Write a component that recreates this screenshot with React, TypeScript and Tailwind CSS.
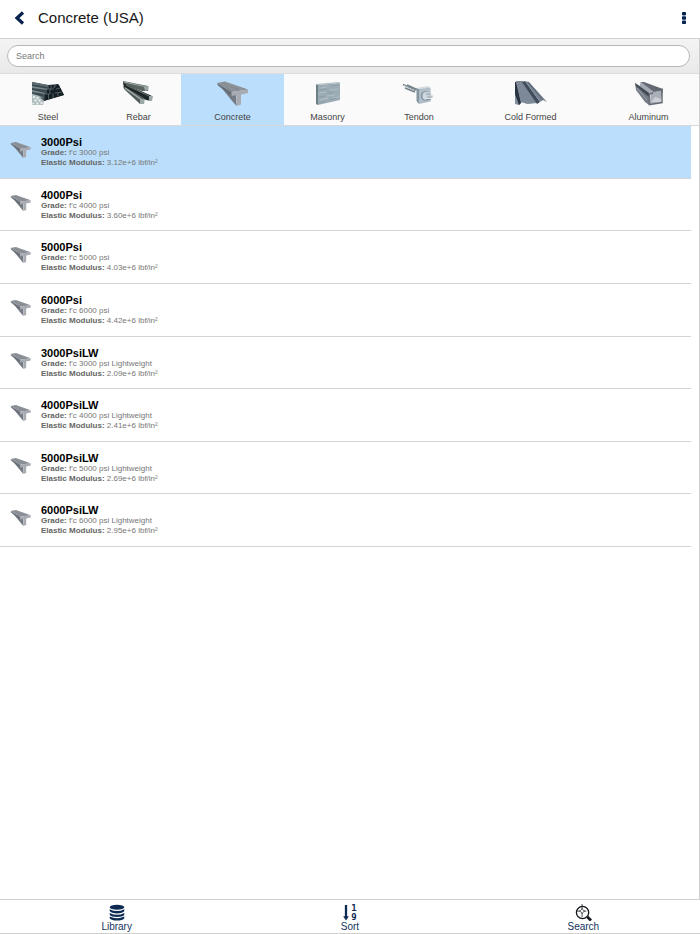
import React, { useState } from 'react';

type Art = () => React.ReactElement;

const SteelArt: Art = () => (
  <svg width="34" height="26" viewBox="0 0 34 26" aria-hidden="true">
    <path d="M1 2 L17 5 L27 4 L33 15 L12 21 L1 17Z" fill="#3c4a4f" />
    <path d="M1 2 L17 5 V7 L1 4.500Z" fill="#5d6c71" />
    <path d="M1 6 L17 9 V10 L1 8Z M1 10 L14 13 V14 L1 12Z M1 13.500 L12 17 V18 L1 15.500Z" fill="#7c8c91" />
    <path d="M20 5h3l-1 3h2l2-4 2 1 5 10-20 6v-6l3-1V9h2V5Z" fill="#161f23" />
    <path d="M16 9h4v-4 M15 14h4V9h4 M13 20v-6 M17.500 19v-5 M22 18v-5 M25 9l4-1 M24 13l7-1 M27 16v-3" fill="none" stroke="#5f7075" strokeWidth=".8" />
    <path d="M1 14 L8 16 L13 21 L12 25 H1Z" fill="#aebabc" />
    <g fill="#e4eaeb">
      <circle cx="3" cy="17" r="1.200" />
      <circle cx="6.500" cy="18" r="1.200" />
      <circle cx="4.500" cy="20.500" r="1.200" />
      <circle cx="8.500" cy="20.500" r="1.200" />
      <circle cx="2.300" cy="23.500" r="1.100" />
      <circle cx="6.300" cy="23.500" r="1.200" />
      <circle cx="10.500" cy="23" r="1.200" />
    </g>
  </svg>
);

const RebarArt: Art = () => (
  <svg width="34" height="26" viewBox="0 0 34 26" aria-hidden="true">
    <path d="M1 1 L26 6 L26 11 L20 11 L1 4Z" fill="#59635f" />
    <path d="M2 2 L25 7" stroke="#a1aaa5" strokeWidth="1.200" />
    <path d="M1 3 L30 16 L30 21 L24 20 L2 7Z" fill="#202728" />
    <path d="M4 5 L27 16" stroke="#6b7572" strokeWidth="1" />
    <path d="M1 6 L22 18 L22 24 L18 24 L2 9Z" fill="#525d5c" />
    <path d="M3 8 L20 20" stroke="#a7b0ad" strokeWidth="1.500" />
    <path d="M22 7 L26.500 6 V10 L23 11Z M27 16 L31 16 L30 21 L27 21Z M18 19 L23 19 L22 24 L18 24Z" fill="#9ca7a7" />
  </svg>
);

const BeamShape = ({ width, height }: { width: number; height: number }) => (
  <svg width={width} height={height} viewBox="0 0 34 26" aria-hidden="true">
    <path d="M4 6 L20 14 L20.500 26 L17 22Z" fill="#747b84" />
    <path d="M1 3 L15.500 12 L15.500 16 L2 5.500Z" fill="#686e77" />
    <path d="M1 3 L9 1.500 L32 9.500 L15.500 12Z" fill="#878c93" />
    <path d="M4 3 L20 11 M8 2 L28 10" stroke="#979ba1" strokeWidth=".8" />
    <path d="M15.500 12 L32 9.500 V13 L25 14.500 V24.500 L20.500 26 V15 L15.500 16Z" fill="#a9abb2" />
  </svg>
);

const ConcreteArt: Art = () => <BeamShape width={34} height={26} />;

const MasonryArt: Art = () => (
  <svg width="34" height="26" viewBox="0 0 34 26" aria-hidden="true">
    <path d="M5 4 L7 5 V25 L5 24Z" fill="#6b7f88" />
    <path d="M5 4 L28 2 L29 3 L7 5Z" fill="#b3c0c7" />
    <path d="M7 5 L29 3 V20 L7 25Z" fill="#9cacb5" />
    <path d="M10 8l6-1 M19 10l8-1 M8 13l7-1 M16 16l8-1 M9 20l8-2 M22 18l6-1" stroke="#b0bec6" strokeWidth="1.200" />
    <path d="M8 10l8-1 M20 6l7-1 M17 13l6-1 M8 17l6-1 M18 20l8-2 M8 23l7-2" stroke="#8b9da7" strokeWidth="1" />
  </svg>
);

const TendonArt: Art = () => (
  <svg width="34" height="26" viewBox="0 0 34 26" aria-hidden="true">
    <path d="M1 4.500 L14 10.500 M3 8 L13 12 M5 5 L15 9.500" stroke="#75838a" strokeWidth="1.500" />
    <path d="M2 5.500 L14 11" stroke="#d0d7da" strokeWidth="1" strokeDasharray="2 1" />
    <path d="M14.500 8 L17 9 L17 24 L14.500 21Z" fill="#8495a0" />
    <path d="M14.500 8 L26 6 L28.500 7.500 L17 9Z" fill="#d2dade" />
    <path d="M17 9 L28.500 7.500 V21.500 L17 24Z" fill="#b0bec7" />
    <circle cx="23.500" cy="16" r="4.800" fill="#8999a5" />
    <circle cx="24.500" cy="16" r="4" fill="#cfd8df" />
    <path d="M24 13.500 H28.500 M25 16.500 H30.500 M24 19 H29" stroke="#8292a0" strokeWidth="2" />
    <path d="M24 13 H28.500 M25 16 H30.500 M24 18.500 H29" stroke="#e5ebef" strokeWidth="1" />
  </svg>
);

const ColdFormedArt: Art = () => (
  <svg width="34" height="26" viewBox="0 0 34 26" aria-hidden="true">
    <path d="M1 2 L6 1 L14 24 L8 22 L5 25 L1 24Z" fill="#8590a0" />
    <path d="M1 2 L2 2 L7 23 L5 25 L1 14Z" fill="#29323f" />
    <path d="M6 1 L9 2 L23 23 L14 24Z" fill="#7d8898" />
    <path d="M2 1 L9 1 L14 24 L7 22Z" fill="#7d8898" />
    <path d="M8 2 L11 1 L26 22 L23 24Z" fill="#414c5b" />
    <path d="M11 1 L15 2 L33 22 L29 20 L26 22Z" fill="#788393" />
    <path d="M14 2 L29 20" stroke="#525d6b" strokeWidth="1" />
  </svg>
);

const AluminumArt: Art = () => (
  <svg width="34" height="26" viewBox="0 0 34 26" aria-hidden="true">
    <path d="M8 2 L12 2 L31 9 L29 18 L22 14Z" fill="#626974" />
    <path d="M9 2 L22 12 L18 14 L7 7Z" fill="#a4aab2" />
    <path d="M3 3 L17 13 L17 25 L13 22 L4 10Z" fill="#747b84" />
    <path d="M3 3 L17 13 V17 L4 6Z" fill="#424953" />
    <path d="M5 8 L15 20" stroke="#9ba1aa" strokeWidth="1" />
    <path d="M19 14 L22 12 L29 10 V22 L18 24Z" fill="#aaafb7" />
    <path d="M19 22 L23 17 L29 19 V22Z" fill="#cccfd5" />
    <path d="M21 13 L17.500 14 V24.500 L30 22.500 V9.500 L26 10.500" fill="none" stroke="#656c76" strokeWidth="1.500" />
  </svg>
);

const categories: { name: string; Picture: Art }[] = [
  { name: 'Steel', Picture: SteelArt },
  { name: 'Rebar', Picture: RebarArt },
  { name: 'Concrete', Picture: ConcreteArt },
  { name: 'Masonry', Picture: MasonryArt },
  { name: 'Tendon', Picture: TendonArt },
  { name: 'Cold Formed', Picture: ColdFormedArt },
  { name: 'Aluminum', Picture: AluminumArt },
];

const materials = [
  { name: '3000Psi', grade: "f'c 3000 psi", modulus: '3.12e+6' },
  { name: '4000Psi', grade: "f'c 4000 psi", modulus: '3.60e+6' },
  { name: '5000Psi', grade: "f'c 5000 psi", modulus: '4.03e+6' },
  { name: '6000Psi', grade: "f'c 6000 psi", modulus: '4.42e+6' },
  { name: '3000PsiLW', grade: "f'c 3000 psi Lightweight", modulus: '2.09e+6' },
  { name: '4000PsiLW', grade: "f'c 4000 psi Lightweight", modulus: '2.41e+6' },
  { name: '5000PsiLW', grade: "f'c 5000 psi Lightweight", modulus: '2.69e+6' },
  { name: '6000PsiLW', grade: "f'c 6000 psi Lightweight", modulus: '2.95e+6' },
];

const LibraryIcon = () => (
  <svg width="16" height="17" viewBox="0 0 16 18" preserveAspectRatio="none" fill="#0c2a52" aria-hidden="true">
    <ellipse cx="8" cy="3.500" rx="7.300" ry="2.700" />
    <path d="M.7 5.500 Q8 9.500 15.300 5.500 V7.500 C14 11 2 11 .7 7.500Z" />
    <path d="M.7 9.500 Q8 13.500 15.300 9.500 V11.300 C14 14.500 2 14.500 .7 11.300Z" />
    <path d="M.7 13.200 Q8 17 15.300 13.200 V15 C14 18.300 2 18.300 .7 15Z" />
  </svg>
);

const SortIcon = () => (
  <span className="flex h-[17px] items-center gap-0.5">
    <svg width="6" height="17" viewBox="0 0 6 18" fill="#0c2a52" aria-hidden="true">
      <path d="M1.800 1 H4.200 V13 H6 L3 17.500 L0 13 H1.800Z" />
    </svg>
    <span className="flex flex-col font-['DejaVu_Sans_Mono',monospace] text-[9px] leading-[9px] font-bold text-[#0c2a52]">
      <span>1</span>
      <span>9</span>
    </span>
  </span>
);

const SearchIcon = () => (
  <svg width="17" height="17" viewBox="0 0 18 18" fill="none" stroke="#15191e" aria-hidden="true">
    <circle cx="8" cy="9" r="6.500" strokeWidth="1.400" />
    <path d="M1 7.500 H12 M7.500 0 V14" strokeWidth=".8" />
    <path d="M7.500 4.500 L8.500 6.500 L10.500 7.500 L8.500 8.500 L7.500 10.500 L6.500 8.500 L4.500 7.500 L6.500 6.500Z" fill="#fff" strokeWidth=".6" />
    <path d="M13 13.500 L17 17.500" strokeWidth="3" />
  </svg>
);

const actions = [
  { name: 'Library', Icon: LibraryIcon },
  { name: 'Sort', Icon: SortIcon },
  { name: 'Search', Icon: SearchIcon },
];

export default function App() {
  const [category, setCategory] = useState('Concrete');
  const [selected, setSelected] = useState('3000Psi');
  const [query, setQuery] = useState('');

  return (
    <div className="flex min-h-screen flex-col bg-white font-['Liberation_Sans',Arial,sans-serif]">
      <header className="flex h-[38px] items-center pr-2.5 pb-0.5 pl-3.5">
        <button type="button" aria-label="Back" className="flex h-6 w-6 items-center">
          <svg width="11" height="16" viewBox="0 0 11 16" fill="none" stroke="#06234d" strokeWidth="3.200" aria-hidden="true">
            <path d="M9 2.500 L3 8 L9 13.500" />
          </svg>
        </button>
        <h1 className="flex-1 text-[15px] leading-5 text-[#161616]">Concrete (USA)</h1>
        <button type="button" aria-label="More options" className="flex h-6 w-3 items-center justify-center">
          <svg width="4" height="14" viewBox="0 0 4 14" fill="#06234d" aria-hidden="true">
            <rect x="0" y="1" width="4" height="3.400" rx=".8" />
            <rect x="0" y="5.300" width="4" height="3.400" rx=".8" />
            <rect x="0" y="9.600" width="4" height="3.400" rx=".8" />
          </svg>
        </button>
      </header>

      <main className="flex flex-1 flex-col border-t border-r border-[#cfcfcf]">
        <div className="border-b border-[#dcdcdc] bg-linear-to-b from-[#f4f4f4] to-[#e9e9e9] py-1.5 pr-[9px] pl-[7px]">
          <input
            type="search"
            aria-label="Search materials"
            placeholder="Search"
            value={query}
            onChange={(e) => setQuery(e.target.value)}
            className="block h-[22px] w-full rounded-full border border-[#b8b8b8] bg-white px-2 text-[9px] text-[#333] outline-none placeholder:text-[#777]"
          />
        </div>

        <nav
          aria-label="Material type"
          className="grid grid-cols-[96fr_85fr_103fr_87fr_96fr_127fr_105fr] border-b border-[#d9d9d9] bg-[#fafafa]"
        >
          {categories.map(({ name, Picture }) => (
            <button
              key={name}
              type="button"
              aria-pressed={category === name}
              onClick={() => setCategory(name)}
              className={`flex h-[51px] flex-col items-center gap-[5px] pt-1.5 text-[9px] leading-3 text-[#444] last:pl-1 ${
                category === name ? 'bg-[#badefb]' : ''
              }`}
            >
              <Picture />
              {name}
            </button>
          ))}
        </nav>

        <ul className="mr-2 grid h-[421px] auto-rows-fr">
          {materials.map((m) => (
            <li key={m.name} className="flex border-b border-[#d4d4d4]">
              <button
                type="button"
                aria-pressed={selected === m.name}
                onClick={() => setSelected(m.name)}
                className={`flex flex-1 items-start pt-2.5 pl-2.5 text-left ${selected === m.name ? 'bg-[#badefb]' : ''}`}
              >
                <span className="pt-[5px]">
                  <BeamShape width={22} height={17} />
                </span>
                <span className="ml-[9px] flex flex-col text-[8px] leading-[10px] text-[#777]">
                  <span className="text-[11px] leading-3 font-bold text-black">{m.name}</span>
                  <span>
                    <b className="text-[#666]">Grade:</b> {m.grade}
                  </span>
                  <span>
                    <b className="text-[#666]">Elastic Modulus:</b> {m.modulus} lbf/in²
                  </span>
                </span>
              </button>
            </li>
          ))}
        </ul>
      </main>

      <footer className="grid grid-cols-3 border-y border-[#cfcfcf] bg-white">
        {actions.map(({ name, Icon }) => (
          <button
            key={name}
            type="button"
            className="flex h-[33px] flex-col items-center pt-1 text-[10px] leading-3 text-[#12335c]"
          >
            <Icon />
            {name}
          </button>
        ))}
      </footer>
    </div>
  );
}
